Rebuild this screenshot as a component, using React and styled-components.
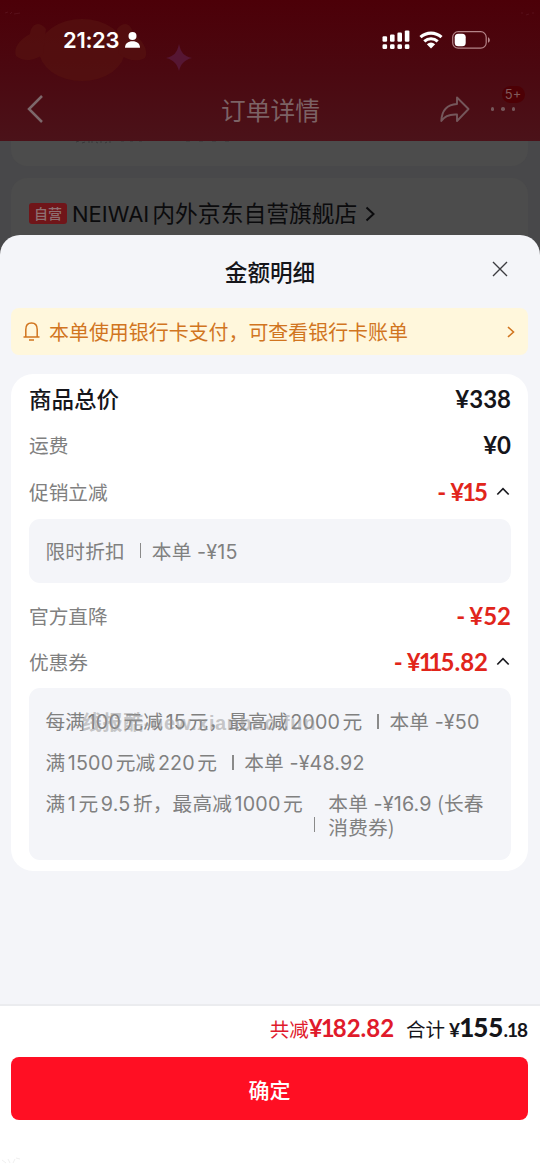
import styled, { createGlobalStyle } from "styled-components";

const App = () => {
  return (
    <Screen>
      <GlobalStyle />
      <Header>
        <HeaderArt viewBox="0 0 540 141">
          <g fill="#561210" opacity="0.7">
            <ellipse cx="82" cy="50" rx="43" ry="31" />
            <path d="M46 29C39 20 31 24 30 34C20 39 13 48 16 56C24 63 37 60 43 54ZM117 29C124 20 132 24 133 34C142 39 149 50 145 58C138 62 128 61 119 54Z" />
          </g>
          <path
            d="M179 44C181 53 184 56 192 58C184 60 181 64 179 71C177 64 174 60 166 58C174 56 177 53 179 44Z"
            fill="#561633"
          />
          <path
            d="M5 13l3-1M10 14l2-2M14 14l6-1M521 13h2M526 15l3-1M532 13h2"
            stroke="#58101a"
          />
        </HeaderArt>
        <StatusBar>
          <Clock>
            21:23
            <svg width="15" height="16" viewBox="0 0 15 16" fill="#fff">
              <circle cx="7.5" cy="4" r="4" />
              <path d="M0 15.8C0 11.4 3 9.2 7.5 9.2S15 11.4 15 15.8Z" />
            </svg>
          </Clock>
          <StatusIcons>
            <svg width="28" height="20" viewBox="0 0 28 20" fill="#fff">
              <rect x="0.5" y="6.3" width="4.6" height="5.4" rx="1.2" />
              <rect x="8" y="4.4" width="4.6" height="7.3" rx="1.2" />
              <rect x="15.4" y="2.5" width="4.6" height="9.2" rx="1.2" />
              <rect x="22.8" y="0.4" width="4.6" height="11.3" rx="1.2" />
              <rect x="0.5" y="14.3" width="4.6" height="4.8" rx="1.4" />
              <rect x="8" y="14.3" width="4.6" height="4.8" rx="1.4" />
              <rect x="15.4" y="14.3" width="4.6" height="4.8" rx="1.4" />
              <rect x="22.8" y="14.3" width="4.6" height="4.8" rx="1.4" />
            </svg>
            <svg width="24" height="18" viewBox="0 0 24 18">
              <path
                d="M1.5 6.2C7.5 .7 16.5 .7 22.5 6.2M5.3 10.3C9.2 6.8 14.8 6.8 18.7 10.3"
                fill="none"
                stroke="#fff"
                strokeWidth="3.1"
              />
              <path d="M7.8 13.2Q12 9.8 16.2 13.2L12 17.4Z" fill="#fff" />
            </svg>
            <svg width="39" height="18" viewBox="0 0 39 18">
              <rect
                x="0.7"
                y="0.7"
                width="33.5"
                height="16.5"
                rx="5.5"
                fill="none"
                stroke="#b48488"
                strokeWidth="1.2"
              />
              <rect x="2.7" y="2.7" width="11" height="12.5" rx="3.5" fill="#fff" />
              <path d="M36 6.2C38.4 7.2 38.4 10.8 36 11.8Z" fill="#b48488" />
            </svg>
          </StatusIcons>
        </StatusBar>
        <NavBar>
          <svg width="18" height="28" viewBox="0 0 18 28" fill="none">
            <path d="M16 1L3 14L16 27" stroke="#7d686b" strokeWidth="2.5" />
          </svg>
          <NavTitle>订单详情</NavTitle>
          <NavActions>
            <svg width="30" height="27" viewBox="0 0 30 27" fill="none">
              <path
                d="M17 1.5L28.5 13L17 25V18.5C9 18 4.5 20 1.3 25C1.8 14 7.5 8.5 17 8Z"
                stroke="#75575b"
                strokeWidth="1.9"
                strokeLinejoin="round"
              />
            </svg>
            <More>
              <Dot />
              <Dot />
              <Dot />
              <Badge>5+</Badge>
            </More>
          </NavActions>
        </NavBar>
      </Header>
      <CutCard>
        <svg width="160" height="3" viewBox="0 0 160 3" stroke="#38383a" fill="none">
          <path d="M1 1l3-1M7 2l3-1M13 1h2M17 0v2M21 1l2 1M26 0v2M30 2l2-1M35 0v2M46 0h3M55 0h3M64 0h3M111 0h4M124 0h4M137 0h4M150 0h4" />
        </svg>
      </CutCard>
      <ShopCard>
        <SelfTag>自营</SelfTag>
        <ShopName>
          <Latin>NEIWAI</Latin>内外京东自营旗舰店
        </ShopName>
        <svg width="11" height="16" viewBox="0 0 11 16" fill="none">
          <path d="M1.5 1.5L8.5 8L1.5 14.5" stroke="#0b0b0d" strokeWidth="2" />
        </svg>
      </ShopCard>

      <Sheet>
        <SheetHeader>
          <SheetTitle>金额明细</SheetTitle>
          <CloseButton>
            <svg width="16" height="16" viewBox="0 0 16 16">
              <path d="M1 1L15 15M15 1L1 15" stroke="#3c3c40" strokeWidth="1.4" />
            </svg>
          </CloseButton>
        </SheetHeader>

        <Notice>
          <svg width="17" height="19" viewBox="0 0 17 19" fill="none" stroke="#d1751f" strokeWidth="1.5">
            <path d="M2.8 15V7.5C2.8 3.5 5 1 8.5 1S14.2 3.5 14.2 7.5V15M0.5 15H16.5M6 18H11" />
          </svg>
          <NoticeText>本单使用银行卡支付，可查看银行卡账单</NoticeText>
          <svg width="8" height="12" viewBox="0 0 8 12" fill="none">
            <path d="M1 1L6.5 6L1 11" stroke="#d1751f" strokeWidth="1.6" />
          </svg>
        </Notice>

        <Card>
          <Row>
            <TotalLabel>商品总价</TotalLabel>
            <Amount>¥338</Amount>
          </Row>
          <Row>
            <Label>运费</Label>
            <Amount>¥0</Amount>
          </Row>
          <Row>
            <Label>促销立减</Label>
            <Amount $minus>
              <Digits value="¥15" />
            </Amount>
            <ChevronUp />
          </Row>
          <Panel>
            <Detail amount="-¥15">限时折扣</Detail>
          </Panel>
          <Row>
            <Label>官方直降</Label>
            <Amount $minus>¥52</Amount>
          </Row>
          <Row>
            <Label>优惠券</Label>
            <Amount $minus>
              <Digits value="¥115.82" />
            </Amount>
            <ChevronUp />
          </Row>
          <Panel>
            <Detail amount="-¥50">
              每满<Num>100</Num>元减<Num>15</Num>元，最高减<Num>2000</Num>元
            </Detail>
            <Detail amount="-¥48.92">
              满<Num>1500</Num>元减<Num>220</Num>元
            </Detail>
            <Detail amount="-¥16.9" note=" (长春消费券)">
              满<Num>1</Num>元<Num>9.5</Num>折，最高减<Num>1000</Num>元
            </Detail>
            <Watermark>线报酷-new.xianbao.fun</Watermark>
          </Panel>
        </Card>

        <Footer>
          <Summary>
            <Saved>
              共减
              <SavedAmount>
                <Digits value="¥182.82" />
              </SavedAmount>
            </Saved>
            <Total>
              合计
              <TotalAmount>
                ¥
                <strong>
                  <Digits value="155" />
                </strong>
                <Digits value=".18" />
              </TotalAmount>
            </Total>
          </Summary>
          <ConfirmButton>确定</ConfirmButton>
          <FooterMark viewBox="0 0 24 10">
            <path d="M2 4l4 3M8 3l2 4M13 7l2-4M16 2l4 1" stroke="#f0f0f0" fill="none" />
          </FooterMark>
        </Footer>
      </Sheet>
    </Screen>
  );
};

const ChevronUp = () => (
  <Chevron width="14" height="9" viewBox="0 0 14 9" fill="none">
    <path d="M1.3 7.5L7 1.7L12.7 7.5" stroke="#1a1a1f" strokeWidth="1.7" />
  </Chevron>
);

// Lato digits are tabular, so the ones get pulled in
const Digits = ({ value }) =>
  value.split("").map((char, i) => (char === "1" ? <One key={i}>1</One> : char));

const Detail = ({ children, amount, note }) => (
  <DetailRow>
    <span>{children}</span>
    <Divider $low={!!note} />
    <DetailValue $wrap={!!note}>
      本单 <DetailAmount>{amount}</DetailAmount>
      {note}
    </DetailValue>
  </DetailRow>
);

export default App;

const GlobalStyle = createGlobalStyle`
  * {
    box-sizing: border-box;
  }

  body {
    margin: 0;
    font-family: "Noto Sans CJK SC", sans-serif;
    text-autospace: no-autospace;
  }

  svg {
    display: block;
    flex-shrink: 0;
  }
`;

const Screen = styled.div`
  position: relative;
  width: 540px;
  height: 1173px;
  overflow: hidden;
  background: #48484a;
`;

const Header = styled.header`
  position: relative;
  height: 141px;
  background: linear-gradient(#4c0008, #4b0810 50%, #4b1219);
`;

const HeaderArt = styled.svg`
  position: absolute;
  inset: 0;
`;

const StatusBar = styled.div`
  position: relative;
  height: 80px;
  padding: 0 49px 0 63px;
  display: flex;
  align-items: center;
  justify-content: space-between;
`;

const Clock = styled.div`
  display: flex;
  align-items: center;
  gap: 6px;
  color: #fff;
  font: 600 22px/26px Inter, sans-serif;
  letter-spacing: -0.3px;
`;

const StatusIcons = styled.div`
  display: flex;
  align-items: center;
  gap: 9px;
`;

const NavBar = styled.div`
  position: relative;
  height: 58px;
  padding: 0 25px 0 26px;
  display: grid;
  grid-template-columns: 1fr auto 1fr;
  align-items: center;
`;

const NavTitle = styled.h1`
  margin: 0;
  color: #7c6265;
  font-size: 24.7px;
  font-weight: 400;
`;

const NavActions = styled.div`
  display: flex;
  justify-content: flex-end;
  align-items: center;
  gap: 21px;
`;

const More = styled.div`
  position: relative;
  display: flex;
  gap: 7px;
`;

const Dot = styled.i`
  width: 3.5px;
  height: 3.5px;
  border-radius: 50%;
  background: #75575b;
`;

const Badge = styled.span`
  position: absolute;
  left: 11px;
  top: -21px;
  width: 23px;
  height: 17px;
  border-radius: 9px;
  background: #4d0005;
  color: #80595b;
  font: 400 13px/17px Inter, sans-serif;
  text-align: center;
`;

const CutCard = styled.div`
  height: 25px;
  margin: 0 12px 0 11px;
  padding-left: 64px;
  border-radius: 0 0 16px 16px;
  background: #4c4c4c;
`;

const ShopCard = styled.div`
  height: 140px;
  margin: 12px 12px 0 11px;
  padding: 21px 18px;
  display: flex;
  align-items: center;
  align-content: flex-start;
  flex-wrap: wrap;
  border-radius: 16px;
  background: #4c4c4c;
`;

const SelfTag = styled.span`
  width: 38px;
  height: 21px;
  margin-right: 5px;
  border-radius: 3px;
  background: #701519;
  color: #8e7072;
  font-size: 14px;
  font-weight: 500;
  line-height: 20px;
  text-align: center;
`;

const ShopName = styled.span`
  margin-right: 8px;
  color: #0b0b0d;
  font-size: 22.8px;
  line-height: 28px;
`;

const Latin = styled.span`
  margin-right: 3px;
  font-family: Inter, sans-serif;
  font-size: 22px;
`;

const Sheet = styled.section`
  position: absolute;
  inset: 235px 0 0;
  display: flex;
  flex-direction: column;
  border-radius: 20px 20px 0 0;
  background: #f4f5f9;
`;

const SheetHeader = styled.div`
  height: 73px;
  display: grid;
  grid-template-columns: 1fr auto 1fr;
  align-items: center;
`;

const SheetTitle = styled.h2`
  grid-column: 2;
  margin: 0;
  color: #15151a;
  font-size: 22.6px;
  font-weight: 500;
`;

const CloseButton = styled.button`
  justify-self: end;
  margin: 0 32px 5px 0;
  padding: 0;
  border: 0;
  background: none;
`;

const Notice = styled.div`
  height: 47px;
  margin: 0 12px 0 11px;
  padding: 0 13px 0 12px;
  display: flex;
  align-items: center;
  border-radius: 8px;
  background: #fff7dc;
`;

const NoticeText = styled.span`
  flex: 1;
  margin-left: 9px;
  color: #d1751f;
  font-size: 19.95px;
`;

const Card = styled.div`
  margin: 19px 12px 0 11px;
  padding: 1px 17px 11px 18px;
  border-radius: 22px;
  background: #fff;
`;

const Row = styled.div`
  height: 46.5px;
  display: flex;
  align-items: center;
`;

const Label = styled.span`
  flex: 1;
  color: #808080;
  font-size: 19.7px;
`;

const TotalLabel = styled(Label)`
  color: #15151a;
  font-size: 22.5px;
  font-weight: 500;
`;

const Amount = styled.span`
  padding-top: 1px;
  color: ${({ $minus }) => ($minus ? "#e1251b" : "#15151a")};
  font: 700 24px/30px Lato, sans-serif;

  &::before {
    content: ${({ $minus }) => ($minus ? '"-"' : "none")};
    margin-right: 4px;
  }
`;

const One = styled.span`
  margin: 0 -2px;
`;

const Chevron = styled.svg`
  margin: 0 1px 0 8px;
`;

const Panel = styled.div`
  position: relative;
  margin: 4px 0 9.5px;
  padding: 20px 16.5px;
  display: flex;
  flex-direction: column;
  gap: 17px;
  border-radius: 11px;
  background: #f4f5f9;

  &:last-child {
    margin: 3px 0 0;
    padding: 21px 16.5px;
  }
`;

const DetailRow = styled.div`
  display: flex;
  color: #808080;
  font-size: 19.7px;
  line-height: 24px;
  letter-spacing: 0.15px;
  white-space: nowrap;
`;

const Num = styled.span`
  margin: 0 2.5px;
  font-family: Inter, sans-serif;
  line-height: 0;
`;

const DetailAmount = styled(Num)`
  margin: 0 1px;
`;

const Divider = styled.i`
  align-self: ${({ $low }) => ($low ? "flex-end" : "center")};
  width: 1.5px;
  height: 15px;
  margin: ${({ $low }) => ($low ? "0 13px 7px 11px" : "0 10.5px 0 15px")};
  background: #8a8a8a;
`;

const DetailValue = styled.span`
  width: ${({ $wrap }) => ($wrap ? "165px" : "auto")};
  white-space: ${({ $wrap }) => ($wrap ? "normal" : "nowrap")};
`;

const Watermark = styled.span`
  position: absolute;
  left: 53px;
  top: 23px;
  color: rgba(150, 150, 150, 0.5);
  font: 700 20px/24px "Liberation Sans", "Noto Sans CJK SC", sans-serif;
  letter-spacing: 0.6px;
  white-space: nowrap;
`;

const Footer = styled.footer`
  position: relative;
  height: 169px;
  margin-top: auto;
  padding: 0 12px 0 11px;
  border-top: 2px solid #ebecef;
  background: #fff;
`;

const Summary = styled.div`
  height: 51px;
  display: flex;
  justify-content: flex-end;
  align-items: baseline;
  gap: 12px;
  font-size: 19.5px;
  line-height: 46px;
`;

const Saved = styled.span`
  color: #e01a2b;
`;

const SavedAmount = styled.span`
  font: 700 24px/30px Lato, sans-serif;
`;

const Total = styled.span`
  color: #15151a;
`;

const TotalAmount = styled.span`
  margin-left: 4px;
  font: 700 19px/30px Lato, sans-serif;

  ${One} {
    margin: 0 -1px;
  }

  strong {
    font-size: 26px;
  }
`;

const ConfirmButton = styled.button`
  width: 100%;
  height: 63px;
  padding: 0;
  border: 0;
  border-radius: 8px;
  background: #ff0f23;
  color: #fff;
  font: 500 21px "Noto Sans CJK SC", sans-serif;
`;

const FooterMark = styled.svg`
  position: absolute;
  left: 0;
  bottom: 7px;
  width: 24px;
  height: 10px;
`;
